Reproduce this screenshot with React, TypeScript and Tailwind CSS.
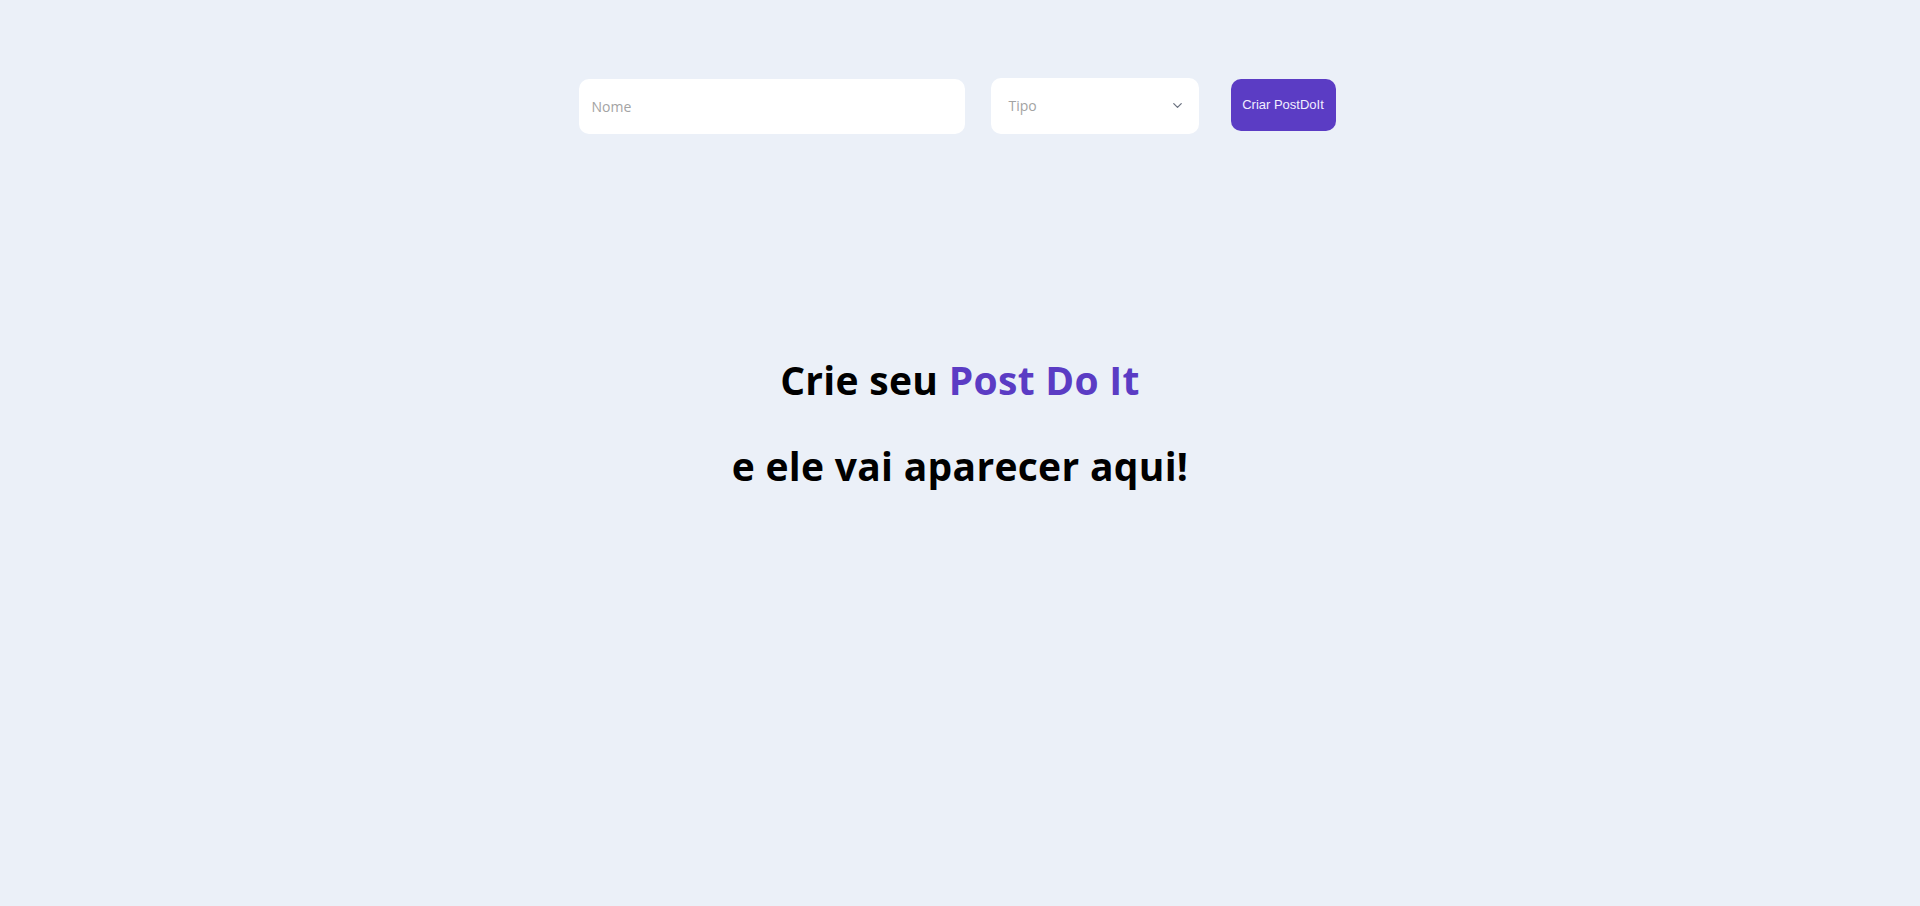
import React from "react";
import { ChevronDown } from "lucide-react";

export default function App() {
  return (
    <div className="min-h-[906px] w-full bg-[#ebf0f8] font-['Open_Sans',sans-serif]">
      {/* Form */}
      <form className="flex items-center justify-center pt-[77px] pr-[6px]">
        <input
          type="text"
          placeholder="Nome"
          className="w-[386px] h-[55px] mt-[2px] rounded-[10px] bg-white px-[13px] text-[14px] outline-none placeholder:text-[#a3a3a3]"
        />
        <div className="ml-[26px] flex h-[56px] w-[208px] items-center justify-between rounded-[10px] bg-white pl-[18px] pr-[14px]">
          <span className="text-[14px] text-[#a3a3a3]">Tipo</span>
          <ChevronDown className="h-[15px] w-[15px] text-[#6b7280]" strokeWidth={2} />
        </div>
        <button
          type="button"
          className="ml-[32px] mb-[2px] h-[52px] w-[105px] rounded-[10px] bg-[#5b3cc4] text-[13px] text-[#f1eeff] font-['Liberation_Sans',Arial,sans-serif]"
        >
          Criar PostDoIt
        </button>
      </form>

      {/* Empty state */}
      <div className="flex flex-col items-center pt-[220px] text-[39px] font-bold leading-[52px] tracking-[0.3px] text-black">
        <h1>
          Crie seu <span className="text-[#5b3cc4]">Post Do It</span>
        </h1>
        <h1 className="mt-[34px]">e ele vai aparecer aqui!</h1>
      </div>
    </div>
  );
}
